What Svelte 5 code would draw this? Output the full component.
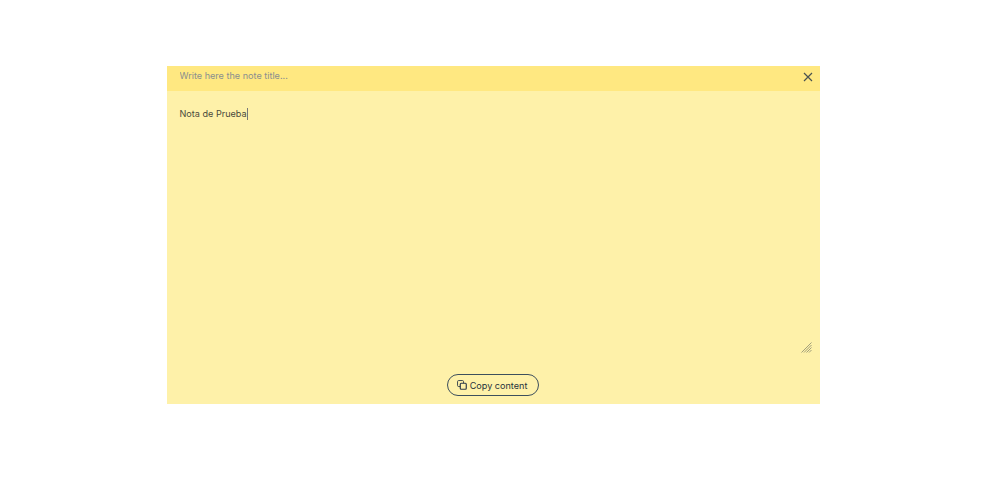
<script>
	let title = "";
	let content = "Nota de Prueba";
</script>

<main>
	<div class="note">
		<div class="note_header">
			<input class="note_title" type="text" placeholder="Write here the note title..." bind:value={title} />
			<button class="close" aria-label="Close">
				<svg width="10" height="10" viewBox="0 0 10 10">
					<path d="M1 1L9 9M9 1L1 9" stroke="#4a5350" stroke-width="1.2" fill="none" />
				</svg>
			</button>
		</div>
		<div class="note_content">
			<textarea class="note_body" bind:value={content}></textarea>
			<span class="caret"></span>
			<svg class="grip" width="11" height="11" viewBox="0 0 11 11" stroke="#8a8a70" stroke-width="0.8" fill="none">
				<path d="M0.5 10.5L10.5 0.5M3 10.5L10.5 3M5.5 10.5L10.5 5.5M8 10.5L10.5 8" />
			</svg>
		</div>
		<div class="note_footer">
			<button class="copy">
				<svg width="10" height="10" viewBox="0 0 11 11" fill="none" stroke="#2f3d4a" stroke-width="1">
					<rect x="0.6" y="0.6" width="6.6" height="6.6" rx="1.2" />
					<rect x="3.6" y="3.6" width="6.6" height="6.6" rx="1" fill="#fef1a9" stroke-width="1.3" />
				</svg>
				Copy content
			</button>
		</div>
	</div>
</main>

<style>
	:global(body) {
		margin: 0;
		background-color: #fff;
		font-family: "Inter", "Noto Sans", sans-serif;
	}
	main {
		padding: 66px 180px 0 167px;
	}
	.note {
		background-color: #fef1a9;
		display: flex;
		flex-direction: column;
		height: 338px;
	}
	.note_header {
		height: 25px;
		background-color: #ffe881;
		display: flex;
		align-items: flex-start;
		justify-content: space-between;
		padding: 0 7.5px 0 12.5px;
		flex-shrink: 0;
		box-sizing: border-box;
	}
	.note_title {
		flex: 1;
		height: 19px;
		border: none;
		outline: none;
		background: transparent;
		padding: 0;
		font: inherit;
		font-size: 9.1px;
		color: #333;
	}
	.note_title::placeholder {
		color: #8a8f8f;
		opacity: 1;
	}
	.close {
		border: none;
		background: none;
		padding: 0;
		margin-top: 6px;
		width: 10px;
		height: 10px;
		display: flex;
		cursor: pointer;
	}
	.note_content {
		position: relative;
		height: 262px;
		flex-shrink: 0;
	}
	.note_body {
		display: block;
		width: calc(100% - 8px);
		height: 100%;
		box-sizing: border-box;
		margin: 0;
		padding: 17px 12.5px 0;
		border: none;
		outline: none;
		resize: none;
		background: transparent;
		font: inherit;
		font-size: 9.1px;
		line-height: 12px;
		color: #4a4a3c;
	}
	.caret {
		position: absolute;
		left: 80px;
		top: 17px;
		width: 1px;
		height: 12px;
		background-color: #777;
	}
	.grip {
		position: absolute;
		right: 8px;
		bottom: 0;
		pointer-events: none;
	}
	.note_footer {
		flex: 1;
		display: flex;
		justify-content: center;
		align-items: flex-start;
		padding: 21px 1px 0 0;
	}
	.copy {
		width: 92px;
		height: 22px;
		box-sizing: border-box;
		border: 1px solid #3d4f5c;
		border-radius: 11px;
		background: transparent;
		color: #26323c;
		font: inherit;
		font-size: 9.1px;
		display: flex;
		align-items: center;
		justify-content: center;
		gap: 3px;
		padding: 0 2px 0 0;
		cursor: pointer;
	}
</style>
